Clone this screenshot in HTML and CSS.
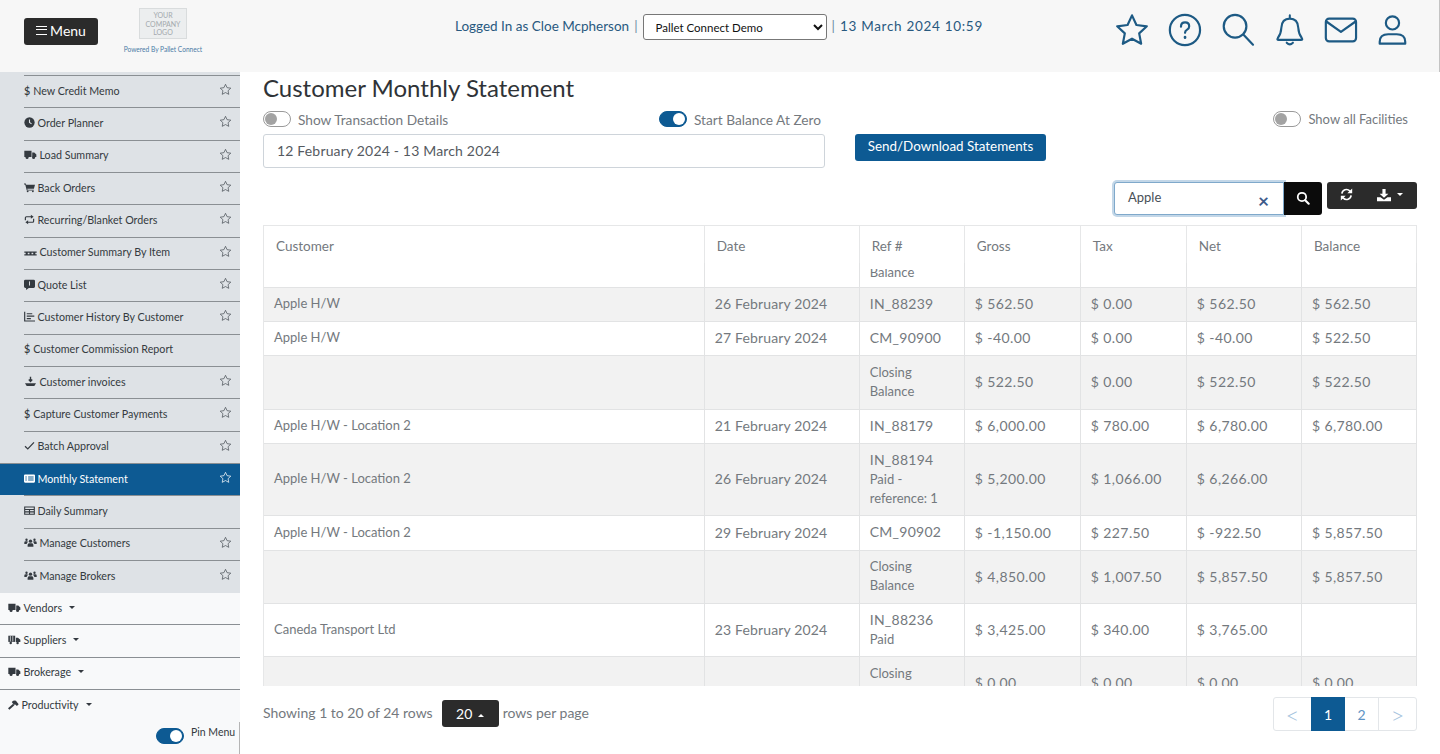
FILE: index.html
```html
<!DOCTYPE html>
<html lang="en">
<head>
    <meta charset="UTF-8">
    <title>Customer Monthly Statement</title>
    <link rel="stylesheet" href="styles.css">
</head>
<body>
    <svg class="sprites" width="0" height="0">
        <symbol id="i-star" viewBox="0 0 16 16"><path d="M8 1.600l1.950 4.150 4.550.6-3.350 3.100.87 4.500L8 11.750l-4.020 2.200.87-4.500L1.500 6.350l4.550-.6z" fill="none" stroke="currentColor" stroke-width="0.9" stroke-linejoin="round"/></symbol>
        <symbol id="i-clock" viewBox="0 0 16 16"><circle cx="8" cy="8" r="7.500" fill="currentColor"/><path d="M8 3.500V8l3 2" fill="none" stroke="#dee2e6" stroke-width="1.600"/></symbol>
        <symbol id="i-truck" viewBox="0 0 18 16"><path d="M0 2.500h10.500v9H0zM11.500 5h3l3 3v3.500h-6z" fill="currentColor"/><circle cx="4" cy="12.500" r="2.200" fill="currentColor"/><circle cx="13.500" cy="12.500" r="2.200" fill="currentColor"/></symbol>
        <symbol id="i-cart" viewBox="0 0 18 16"><path d="M0 1.500h3l.6 2H18l-1.800 6.500H5.400l.4 1.500H16v1.500H4.500L2 3H0z" fill="currentColor"/><circle cx="6" cy="14.300" r="1.500" fill="currentColor"/><circle cx="14.500" cy="14.300" r="1.500" fill="currentColor"/></symbol>
        <symbol id="i-retweet" viewBox="0 0 16 16"><path d="M2 9V5.500Q2 4 3.500 4H11M14 7v3.500Q14 12 12.500 12H5" fill="none" stroke="currentColor" stroke-width="1.700"/><path d="M10 1l4 3-4 3zM6 9l-4 3 4 3z" fill="currentColor"/></symbol>
        <symbol id="i-sync" viewBox="0 0 16 16"><path d="M2.300 7A5.700 5.700 0 0 1 12 3.600L13.500 5M13.700 9A5.700 5.700 0 0 1 4 12.400L2.500 11" fill="none" stroke="currentColor" stroke-width="2"/><path d="M15 0.500V6.500H9zM1 15.500V9.500H7z" fill="currentColor"/></symbol>
        <symbol id="i-pallet" viewBox="0 0 18 16"><path d="M0 8h18v1.800H0zM0 12h18v1.800H0zM2 9h3v4H2zM7.500 9h3v4h-3zM13 9h3v4h-3z" fill="currentColor"/></symbol>
        <symbol id="i-quote" viewBox="0 0 16 16"><path d="M2 1h12q2 0 2 2v8q0 2-2 2H7l-4 3v-3H2q-2 0-2-2V3q0-2 2-2z" fill="currentColor"/><path d="M8 3.500v6" stroke="#dee2e6" stroke-width="1.400"/></symbol>
        <symbol id="i-chart" viewBox="0 0 16 16"><path d="M1 1v13.500h15" fill="none" stroke="currentColor" stroke-width="1.700"/><path d="M4 4h8M4 7.500h11M4 11h6" stroke="currentColor" stroke-width="1.700"/></symbol>
        <symbol id="i-ship" viewBox="0 0 18 16"><path d="M1 10.500h16l-2.500 4h-11z" fill="currentColor"/><path d="M9 1v6M6.500 5L9 8l2.500-3" fill="none" stroke="currentColor" stroke-width="2"/></symbol>
        <symbol id="i-check" viewBox="0 0 16 16"><path d="M1.500 9l4 4 9-9.500" fill="none" stroke="currentColor" stroke-width="1.800"/></symbol>
        <symbol id="i-list" viewBox="0 0 16 16"><path fill-rule="evenodd" d="M1.500 2h13Q16 2 16 3.500v9q0 1.500-1.500 1.500h-13Q0 14 0 12.500v-9Q0 2 1.500 2zM2 5v1.500h2V5zm4 0v1.500h8V5zM2 8v1.500h2V8zm4 0v1.500h8V8zm-4 2.800v1h2v-1zm4 0v1h8v-1z" fill="currentColor"/></symbol>
        <symbol id="i-table" viewBox="0 0 16 16"><path d="M1 3h14v10.500H1zM1 6.500h14M8 6.500v7M1 10h14" fill="none" stroke="currentColor" stroke-width="1.600"/></symbol>
        <symbol id="i-users" viewBox="0 0 18 16"><circle cx="9" cy="6" r="2.400" fill="currentColor"/><path d="M4.800 14v-2.500Q4.800 9 7 9h4q2.200 0 2.200 2.500V14z" fill="currentColor"/><circle cx="3.200" cy="4" r="1.700" fill="currentColor"/><circle cx="14.800" cy="4" r="1.700" fill="currentColor"/><path d="M0 10V8q0-1.800 2-1.800h2.800V8Q3.500 8.500 3.500 10zM18 10V8q0-1.800-2-1.800h-2.800V8q1.300.5 1.300 2z" fill="currentColor"/></symbol>
        <symbol id="i-supply" viewBox="0 0 18 16"><path d="M0 2.500h10v9H0z" fill="currentColor"/><path d="M3 3v8M6.500 3v8" stroke="#f8f9fa" stroke-width="1"/><path d="M11 5.500h3l3.500 3v3H11z" fill="currentColor"/><circle cx="3.500" cy="13" r="1.800" fill="currentColor"/><circle cx="13.500" cy="13" r="1.800" fill="currentColor"/></symbol>
        <symbol id="i-hammer" viewBox="0 0 16 16"><path d="M0 13.500l7.500-6.500 1.800 2L2 15.500z" fill="currentColor"/><path d="M5.500 4.500Q8 1.800 11.500 2.500L15.500 7.500 13 10 10.500 8 9 8.500 7 6.500z" fill="currentColor"/></symbol>
        <symbol id="i-search-solid" viewBox="0 0 16 16"><circle cx="6.800" cy="6.800" r="4.800" fill="none" stroke="currentColor" stroke-width="2"/><path d="M10.500 10.500l4 4" stroke="currentColor" stroke-width="2.400" stroke-linecap="round"/></symbol>
        <symbol id="i-download" viewBox="0 0 16 16"><path d="M6.200 1h3.600v5.500H13L8 11.200 3 6.500h3.200z" fill="currentColor"/><path d="M0 10.500h4L8 13.500l4-3h4V15H0z" fill="currentColor"/></symbol>
    </svg>

    <header class="topbar">
        <div class="brand-area">
            <button class="btn-menu"><span class="burger"></span>Menu</button>
            <div class="logo">
                <div class="logo-box">YOUR<br>COMPANY<br>LOGO</div>
                <div class="logo-sub">Powered By Pallet Connect</div>
            </div>
        </div>
        <div class="session">
            <span>Logged In as Cloe Mcpherson</span>
            <span class="sep">|</span>
            <select class="facility">
                <option>Pallet Connect Demo</option>
            </select>
            <span class="sep">|</span>
            <span class="now">13 March 2024 10:59</span>
        </div>
        <nav class="top-icons">
            <svg viewBox="0 0 36 36"><path d="M18 2.500l4.700 10.200 11 1.400-8.100 7.500 2.100 11L18 27.200l-9.700 5.400 2.100-11-8.100-7.500 11-1.400z" /></svg>
            <svg viewBox="0 0 36 36"><circle cx="19" cy="18" r="16"/><path d="M14.800 14.500q0-4.500 4.400-4.500 4.300 0 4.300 4 0 2.300-2.200 3.600-2.200 1.300-2.200 3.400"/><path class="dot" d="M19.100 25.500v.6"/></svg>
            <svg viewBox="0 0 36 36"><circle cx="17" cy="14" r="12"/><path d="M26 23l10 10.500"/></svg>
            <svg viewBox="0 0 36 36"><path transform="translate(3 0) scale(.94 1)" d="M18 6q-9 0-9.500 9.500c-.3 5.500-2 8.500-4 11q-1.500 2 1 2h25q2.500 0 1-2c-2-2.500-3.700-5.500-4-11Q27 6 18 6zM18 6V2.500M14.500 31.500q3.500 3.500 7 0"/></svg>
            <svg viewBox="0 0 36 36"><rect x="3" y="6" width="32" height="24" rx="3.500"/><path d="M3.500 9l15.500 11L34.500 9"/></svg>
            <svg viewBox="0 0 36 36"><circle cx="18.500" cy="10.500" r="7"/><path d="M5 32.500v-2q0-8 9-8h9q9 0 9 8v2z"/></svg>
        </nav>
    </header>

    <div class="shell">
        <aside class="sidebar">
            <ul class="subnav">
                <li><span class="dollar">$</span>New Credit Memo<svg class="fav"><use href="#i-star"/></svg></li>
                <li><svg class="ic"><use href="#i-clock"/></svg>Order Planner<svg class="fav"><use href="#i-star"/></svg></li>
                <li><svg class="ic wide"><use href="#i-truck"/></svg>Load Summary<svg class="fav"><use href="#i-star"/></svg></li>
                <li><svg class="ic"><use href="#i-cart"/></svg>Back Orders<svg class="fav"><use href="#i-star"/></svg></li>
                <li><svg class="ic"><use href="#i-retweet"/></svg>Recurring/Blanket Orders<svg class="fav"><use href="#i-star"/></svg></li>
                <li><svg class="ic wide"><use href="#i-pallet"/></svg>Customer Summary By Item<svg class="fav"><use href="#i-star"/></svg></li>
                <li><svg class="ic"><use href="#i-quote"/></svg>Quote List<svg class="fav"><use href="#i-star"/></svg></li>
                <li><svg class="ic"><use href="#i-chart"/></svg>Customer History By Customer<svg class="fav"><use href="#i-star"/></svg></li>
                <li><span class="dollar">$</span>Customer Commission Report</li>
                <li><svg class="ic wide"><use href="#i-ship"/></svg>Customer invoices<svg class="fav"><use href="#i-star"/></svg></li>
                <li><span class="dollar">$</span>Capture Customer Payments<svg class="fav"><use href="#i-star"/></svg></li>
                <li><svg class="ic"><use href="#i-check"/></svg>Batch Approval<svg class="fav"><use href="#i-star"/></svg></li>
                <li class="active"><svg class="ic"><use href="#i-list"/></svg>Monthly Statement<svg class="fav"><use href="#i-star"/></svg></li>
                <li><svg class="ic"><use href="#i-table"/></svg>Daily Summary</li>
                <li><svg class="ic wide"><use href="#i-users"/></svg>Manage Customers<svg class="fav"><use href="#i-star"/></svg></li>
                <li><svg class="ic wide"><use href="#i-users"/></svg>Manage Brokers<svg class="fav"><use href="#i-star"/></svg></li>
            </ul>
            <ul class="mainnav">
                <li><svg class="ic wide"><use href="#i-truck"/></svg>Vendors<span class="caret"></span></li>
                <li><svg class="ic wide"><use href="#i-supply"/></svg>Suppliers<span class="caret"></span></li>
                <li><svg class="ic wide"><use href="#i-truck"/></svg>Brokerage<span class="caret"></span></li>
                <li><svg class="ic"><use href="#i-hammer"/></svg>Productivity<span class="caret"></span></li>
            </ul>
            <div class="pin-row">
                <span class="switch on"></span>
                <span class="pin-label">Pin Menu</span>
            </div>
        </aside>

        <main class="content">
            <h1>Customer Monthly Statement</h1>
            <div class="filters">
                <div class="filter-left">
                    <div class="switches">
                        <label class="switch-label"><span class="switch"></span>Show Transaction Details</label>
                        <label class="switch-label"><span class="switch on"></span>Start Balance At Zero</label>
                    </div>
                    <div class="date-range">12 February 2024 - 13 March 2024</div>
                </div>
                <button class="btn-send">Send/Download Statements</button>
                <label class="switch-label facilities"><span class="switch"></span>Show all Facilities</label>
            </div>

            <div class="toolbar">
                <div class="search-box">
                    <span class="search-text">Apple</span>
                    <span class="search-clear">&times;</span>
                </div>
                <button class="btn-search"><svg><use href="#i-search-solid"/></svg></button>
                <div class="tool-group">
                    <svg class="t-refresh"><use href="#i-sync"/></svg>
                    <svg class="t-download"><use href="#i-download"/></svg>
                    <span class="caret"></span>
                </div>
            </div>

            <div class="table-wrap">
                <table class="statement">
                    <colgroup>
                        <col class="c-cust"><col class="c-date"><col class="c-ref"><col class="c-gross"><col class="c-tax"><col class="c-net"><col class="c-bal">
                    </colgroup>
                    <thead>
                        <tr><th>Customer</th><th>Date</th><th>Ref #</th><th>Gross</th><th>Tax</th><th>Net</th><th>Balance</th></tr>
                    </thead>
                    <tbody>
                        <tr class="peek"><td></td><td></td><td><div>Balance</div></td><td></td><td></td><td></td><td></td></tr>
                        <tr class="odd"><td>Apple H/W</td><td class="date">26 February 2024</td><td><span class="code">IN_88239</span></td><td class="num">$ 562.50</td><td class="num">$ 0.00</td><td class="num">$ 562.50</td><td class="num">$ 562.50</td></tr>
                        <tr><td>Apple H/W</td><td class="date">27 February 2024</td><td><span class="code">CM_90900</span></td><td class="num">$ -40.00</td><td class="num">$ 0.00</td><td class="num">$ -40.00</td><td class="num">$ 522.50</td></tr>
                        <tr class="odd tall"><td></td><td></td><td>Closing Balance</td><td class="num">$ 522.50</td><td class="num">$ 0.00</td><td class="num">$ 522.50</td><td class="num">$ 522.50</td></tr>
                        <tr><td>Apple H/W - Location 2</td><td class="date">21 February 2024</td><td><span class="code">IN_88179</span></td><td class="num">$ 6,000.00</td><td class="num">$ 780.00</td><td class="num">$ 6,780.00</td><td class="num">$ 6,780.00</td></tr>
                        <tr class="odd triple"><td>Apple H/W - Location 2</td><td class="date">26 February 2024</td><td><span class="code">IN_88194</span><br>Paid - reference: 1</td><td class="num">$ 5,200.00</td><td class="num">$ 1,066.00</td><td class="num">$ 6,266.00</td><td></td></tr>
                        <tr class="wide-row"><td>Apple H/W - Location 2</td><td class="date">29 February 2024</td><td><span class="code">CM_90902</span></td><td class="num">$ -1,150.00</td><td class="num">$ 227.50</td><td class="num">$ -922.50</td><td class="num">$ 5,857.50</td></tr>
                        <tr class="odd double"><td></td><td></td><td>Closing Balance</td><td class="num">$ 4,850.00</td><td class="num">$ 1,007.50</td><td class="num">$ 5,857.50</td><td class="num">$ 5,857.50</td></tr>
                        <tr class="double"><td>Caneda Transport Ltd</td><td class="date">23 February 2024</td><td><span class="code">IN_88236</span><br>Paid</td><td class="num">$ 3,425.00</td><td class="num">$ 340.00</td><td class="num">$ 3,765.00</td><td></td></tr>
                        <tr class="odd tall"><td></td><td></td><td>Closing Balance</td><td class="num">$ 0.00</td><td class="num">$ 0.00</td><td class="num">$ 0.00</td><td class="num">$ 0.00</td></tr>
                    </tbody>
                </table>
            </div>

            <div class="pager-row">
                <div class="page-info">
                    <span>Showing 1 to 20 of 24 rows</span>
                    <button class="btn-size">20<span class="caret up"></span></button>
                    <span>rows per page</span>
                </div>
                <div class="pagination">
                    <span class="pg prev">&lt;</span>
                    <span class="pg current">1</span>
                    <span class="pg">2</span>
                    <span class="pg next">&gt;</span>
                </div>
            </div>
        </main>
    </div>
</body>
</html>
```

FILE: styles.css
```css
* {
    box-sizing: border-box;
}
html, body {
    margin: 0;
    height: 100%;
    overflow: hidden;
}
body {
    font-family: "Lato", "Liberation Sans", sans-serif;
    font-size: 14px;
    color: #74797e;
    background-color: #fff;
}
.sprites {
    position: absolute;
}
ul {
    list-style: none;
    margin: 0;
    padding: 0;
}
button {
    font-family: inherit;
    border: none;
}

/* top bar */
.topbar {
    height: 72px;
    background-color: #f7f7f7;
    border-right: 1px solid #c4c4c4;
    display: flex;
    align-items: flex-start;
}
.brand-area {
    width: 192px;
    flex-shrink: 0;
    display: flex;
    padding-left: 24px;
}
.btn-menu {
    margin-top: 18px;
    width: 74px;
    height: 27px;
    flex-shrink: 0;
    background-color: #2b2b2b;
    color: #fff;
    border-radius: 3px;
    font-size: 14px;
    padding: 0 0 2px;
    display: flex;
    align-items: center;
    justify-content: center;
    gap: 3px;
}
.burger {
    width: 11px;
    height: 9px;
    border-top: 1.500px solid #fff;
    border-bottom: 1.500px solid #fff;
    position: relative;
}
.burger::after {
    content: "";
    position: absolute;
    left: 0;
    right: 0;
    top: 2.250px;
    border-top: 1.500px solid #fff;
}
.logo {
    margin-left: 22px;
    margin-top: 8px;
    width: 86px;
    flex-shrink: 0;
    display: flex;
    flex-direction: column;
    align-items: center;
}
.logo-box {
    width: 48px;
    height: 31px;
    background-color: #eceeef;
    border: 1px solid #d9dcdd;
    font-size: 7px;
    line-height: 8.500px;
    color: #a3a9ad;
    text-align: center;
    padding-top: 2px;
    overflow: hidden;
}
.logo-sub {
    font-size: 6.600px;
    color: #4b7ba6;
    margin-top: 6px;
    white-space: nowrap;
}
.session {
    padding-left: 263px;
    height: 54px;
    display: flex;
    align-items: center;
    gap: 5px;
    color: #29597f;
    font-size: 13.500px;
    white-space: nowrap;
}
.session > span {
    position: relative;
    top: -1px;
}
.now {
    letter-spacing: 0.7px;
}
.sep {
    color: #6c8aa3;
}
.facility {
    width: 184px;
    height: 26px;
    font-family: "Lato", sans-serif;
    font-size: 11.500px;
    color: #111;
    background-color: #fff;
    border: 1px solid #777;
    border-radius: 3px;
    padding-left: 8px;
}
.top-icons {
    margin-left: auto;
    margin-right: 30px;
    margin-top: 13px;
    display: flex;
    gap: 18px;
}
.top-icons svg {
    width: 34px;
    height: 34px;
    fill: none;
    stroke: #1d5a84;
    stroke-width: 2.300;
    stroke-linejoin: round;
    stroke-linecap: round;
    overflow: visible;
}
.top-icons .dot {
    stroke-width: 2.800;
}

/* sidebar */
.shell {
    height: 682px;
    display: flex;
}
.sidebar {
    width: 240px;
    flex-shrink: 0;
    display: flex;
    flex-direction: column;
    background-color: #f8f9fa;
}
.subnav {
    background-color: #dee2e6;
    padding: 3px 0 0 24px;
    height: 521px;
}
.subnav li {
    height: 32.350px;
    padding-bottom: 3px;
    border-top: 1px solid #8a8f93;
    font-size: 10.700px;
    color: #343a40;
    display: flex;
    align-items: center;
    position: relative;
}
.subnav li.active {
    background-color: #0d5a93;
    color: #fff;
    margin-left: -24px;
    padding-left: 24px;
}
.subnav li .fav {
    position: absolute;
    right: 8px;
    top: 7px;
    width: 13px;
    height: 13px;
    color: #495057;
}
.subnav li.active .fav {
    color: #fff;
}
.dollar {
    margin-right: 3px;
    font-weight: 600;
}
.ic {
    width: 11px;
    height: 11px;
    margin-right: 2.500px;
    flex-shrink: 0;
}
.ic.wide {
    width: 13px;
}
.mainnav {
    background-color: #f8f9fa;
}
.mainnav li {
    height: 32.350px;
    padding: 0 0 3px 8px;
    font-size: 10.700px;
    color: #343a40;
    display: flex;
    align-items: center;
    border-bottom: 1px solid #8a8f93;
}
.mainnav li:last-child {
    border-bottom: 0;
}
.caret {
    display: inline-block;
    margin-left: 7px;
    border-left: 3px solid transparent;
    border-right: 3px solid transparent;
    border-top: 3px solid currentColor;
}
.caret.up {
    border-top: 0;
    border-bottom: 3px solid currentColor;
}
.pin-row {
    flex: 1;
    display: flex;
    align-items: flex-start;
    padding: 6px 0 0 156px;
    gap: 7px;
    border-right: 1px solid #b5b5b5;
}
.pin-label {
    font-size: 10.500px;
    margin-top: -2px;
    color: #343a40;
}
.switch {
    display: inline-block;
    flex-shrink: 0;
    width: 28px;
    height: 16px;
    border-radius: 8px;
    border: 1px solid #9a9a9a;
    background-color: #fff;
    position: relative;
}
.switch::after {
    content: "";
    position: absolute;
    left: 1px;
    top: 1px;
    width: 12px;
    height: 12px;
    border-radius: 50%;
    background-color: #a3a3a3;
}
.switch.on {
    background-color: #0d5a93;
    border-color: #0d5a93;
}
.switch.on::after {
    left: 13px;
    background-color: #fff;
}

/* main area */
.content {
    flex: 1;
    padding: 0 23px;
    min-width: 0;
}
h1 {
    font-size: 24px;
    font-weight: 400;
    color: #2f3337;
    margin: 0;
    height: 39px;
    line-height: 32px;
}
.filters {
    display: flex;
    align-items: flex-start;
    height: 71px;
}
.filter-left {
    width: 562px;
}
.switches {
    display: flex;
    justify-content: space-between;
    padding-right: 4px;
}
.switch-label {
    display: flex;
    align-items: center;
    gap: 7px;
    font-size: 13.700px;
    height: 16px;
    color: #74797e;
}
.date-range {
    margin-top: 7px;
    height: 34px;
    border: 1px solid #ced4da;
    border-radius: 3px;
    padding-left: 13px;
    line-height: 31px;
    color: #555a5f;
    font-size: 14px;
    letter-spacing: 0.17px;
}
.btn-send {
    margin-left: 30px;
    margin-top: 23px;
    width: 191px;
    height: 27px;
    background-color: #0d5a93;
    color: #fff;
    font-size: 13.400px;
    border-radius: 3px;
    padding: 0 0 3px;
}
.facilities {
    margin-left: auto;
    margin-right: 9px;
    font-size: 13px;
}
.toolbar {
    display: flex;
    justify-content: flex-end;
    align-items: flex-start;
    height: 43px;
}
.search-box {
    width: 170px;
    height: 33px;
    border: 1px solid #7fa9cb;
    box-shadow: 0 0 0 2px #c3d7e8;
    border-radius: 3px 0 0 3px;
    background-color: #fff;
    display: flex;
    align-items: center;
    justify-content: space-between;
    padding: 0 14px 3px 13px;
    font-size: 13px;
    color: #495057;
}
.search-clear {
    color: #3d5a8a;
    font-size: 19px;
    font-weight: 700;
    line-height: 1;
    position: relative;
    top: 3px;
}
.btn-search {
    width: 38px;
    height: 33px;
    background-color: #0b0b0b;
    color: #fff;
    border-radius: 0 3px 3px 0;
    display: flex;
    align-items: center;
    justify-content: center;
    padding: 0 0 2px;
    position: relative;
}
.btn-search svg {
    width: 14px;
    height: 14px;
}
.tool-group {
    margin-left: 5px;
    width: 90px;
    height: 27px;
    background-color: #2b2b2b;
    color: #fff;
    border-radius: 3px;
    display: flex;
    align-items: center;
    padding: 0 0 2px 13px;
}
.t-refresh {
    width: 13px;
    height: 13px;
}
.t-download {
    width: 14px;
    height: 14px;
    margin-left: 24px;
}
.tool-group .caret {
    margin-left: 6px;
}

/* table */
.table-wrap {
    height: 461px;
    overflow: hidden;
    border-left: 1px solid #e6e7e8;
}
.statement {
    width: 1153px;
    table-layout: fixed;
    border-collapse: collapse;
    color: #74797e;
    font-size: 13px;
}
.c-cust { width: 440px; }
.c-date { width: 155px; }
.c-ref { width: 105px; }
.c-gross { width: 116px; }
.c-tax { width: 106px; }
.c-net { width: 115px; }
.c-bal { width: 115px; }
.statement th {
    height: 37px;
    font-size: 13.500px;
    font-weight: 400;
    text-align: left;
    padding: 6px 12px 0;
    vertical-align: top;
    border: 1px solid #e6e7e8;
    border-bottom: 0;
    border-left: 0;
    line-height: 29px;
}
.statement td {
    height: 34px;
    padding: 5px 10px 7px;
    line-height: 19px;
    border: 1px solid #e2e3e4;
    border-left: 0;
}
.statement .num {
    font-size: 14px;
    letter-spacing: 0.4px;
}
.statement .date {
    font-size: 14px;
    letter-spacing: 0.15px;
}
.code {
    font-size: 14px;
    letter-spacing: 0.25px;
}
.statement .tall td {
    height: 54px;
}
.statement .double td {
    height: 53px;
}
.statement .triple td {
    height: 72px;
}
.statement .wide-row td {
    height: 35px;
}
.statement .peek td {
    height: 25px;
    padding: 6px 10px 0;
    border-top: 0;
    vertical-align: top;
}
.peek div {
    height: 8px;
    line-height: 6px;
    overflow: hidden;
}
.odd td {
    background-color: #f2f2f2;
}

/* pager */
.pager-row {
    display: flex;
    justify-content: space-between;
    align-items: flex-start;
    padding-top: 11px;
}
.page-info {
    display: flex;
    align-items: center;
    height: 33px;
    gap: 4px;
}
.page-info > span {
    margin-top: -2px;
}
.btn-size {
    margin-left: 5px;
    width: 57px;
    height: 27px;
    background-color: #2b2b2b;
    color: #fff;
    font-size: 14px;
    border-radius: 3px;
    padding: 0;
}
.btn-size .caret {
    margin-left: 6px;
    vertical-align: 2px;
}
.pagination {
    display: flex;
    width: 144px;
    height: 34px;
    border: 1px solid #e3e6e9;
    border-radius: 3px;
}
.pg {
    width: 33px;
    display: flex;
    align-items: center;
    justify-content: center;
    color: #5f93c4;
    font-size: 14px;
}
.pg.prev {
    width: 37px;
    font-size: 24px;
    font-weight: 300;
    color: #a5c3de;
}
.pg.next {
    width: 38px;
    border-left: 1px solid #e3e6e9;
    font-size: 24px;
    font-weight: 300;
    color: #a5c3de;
}
.pg.current {
    width: 34px;
    background-color: #0d5a93;
    color: #fff;
    margin: -1px 0;
}
```
